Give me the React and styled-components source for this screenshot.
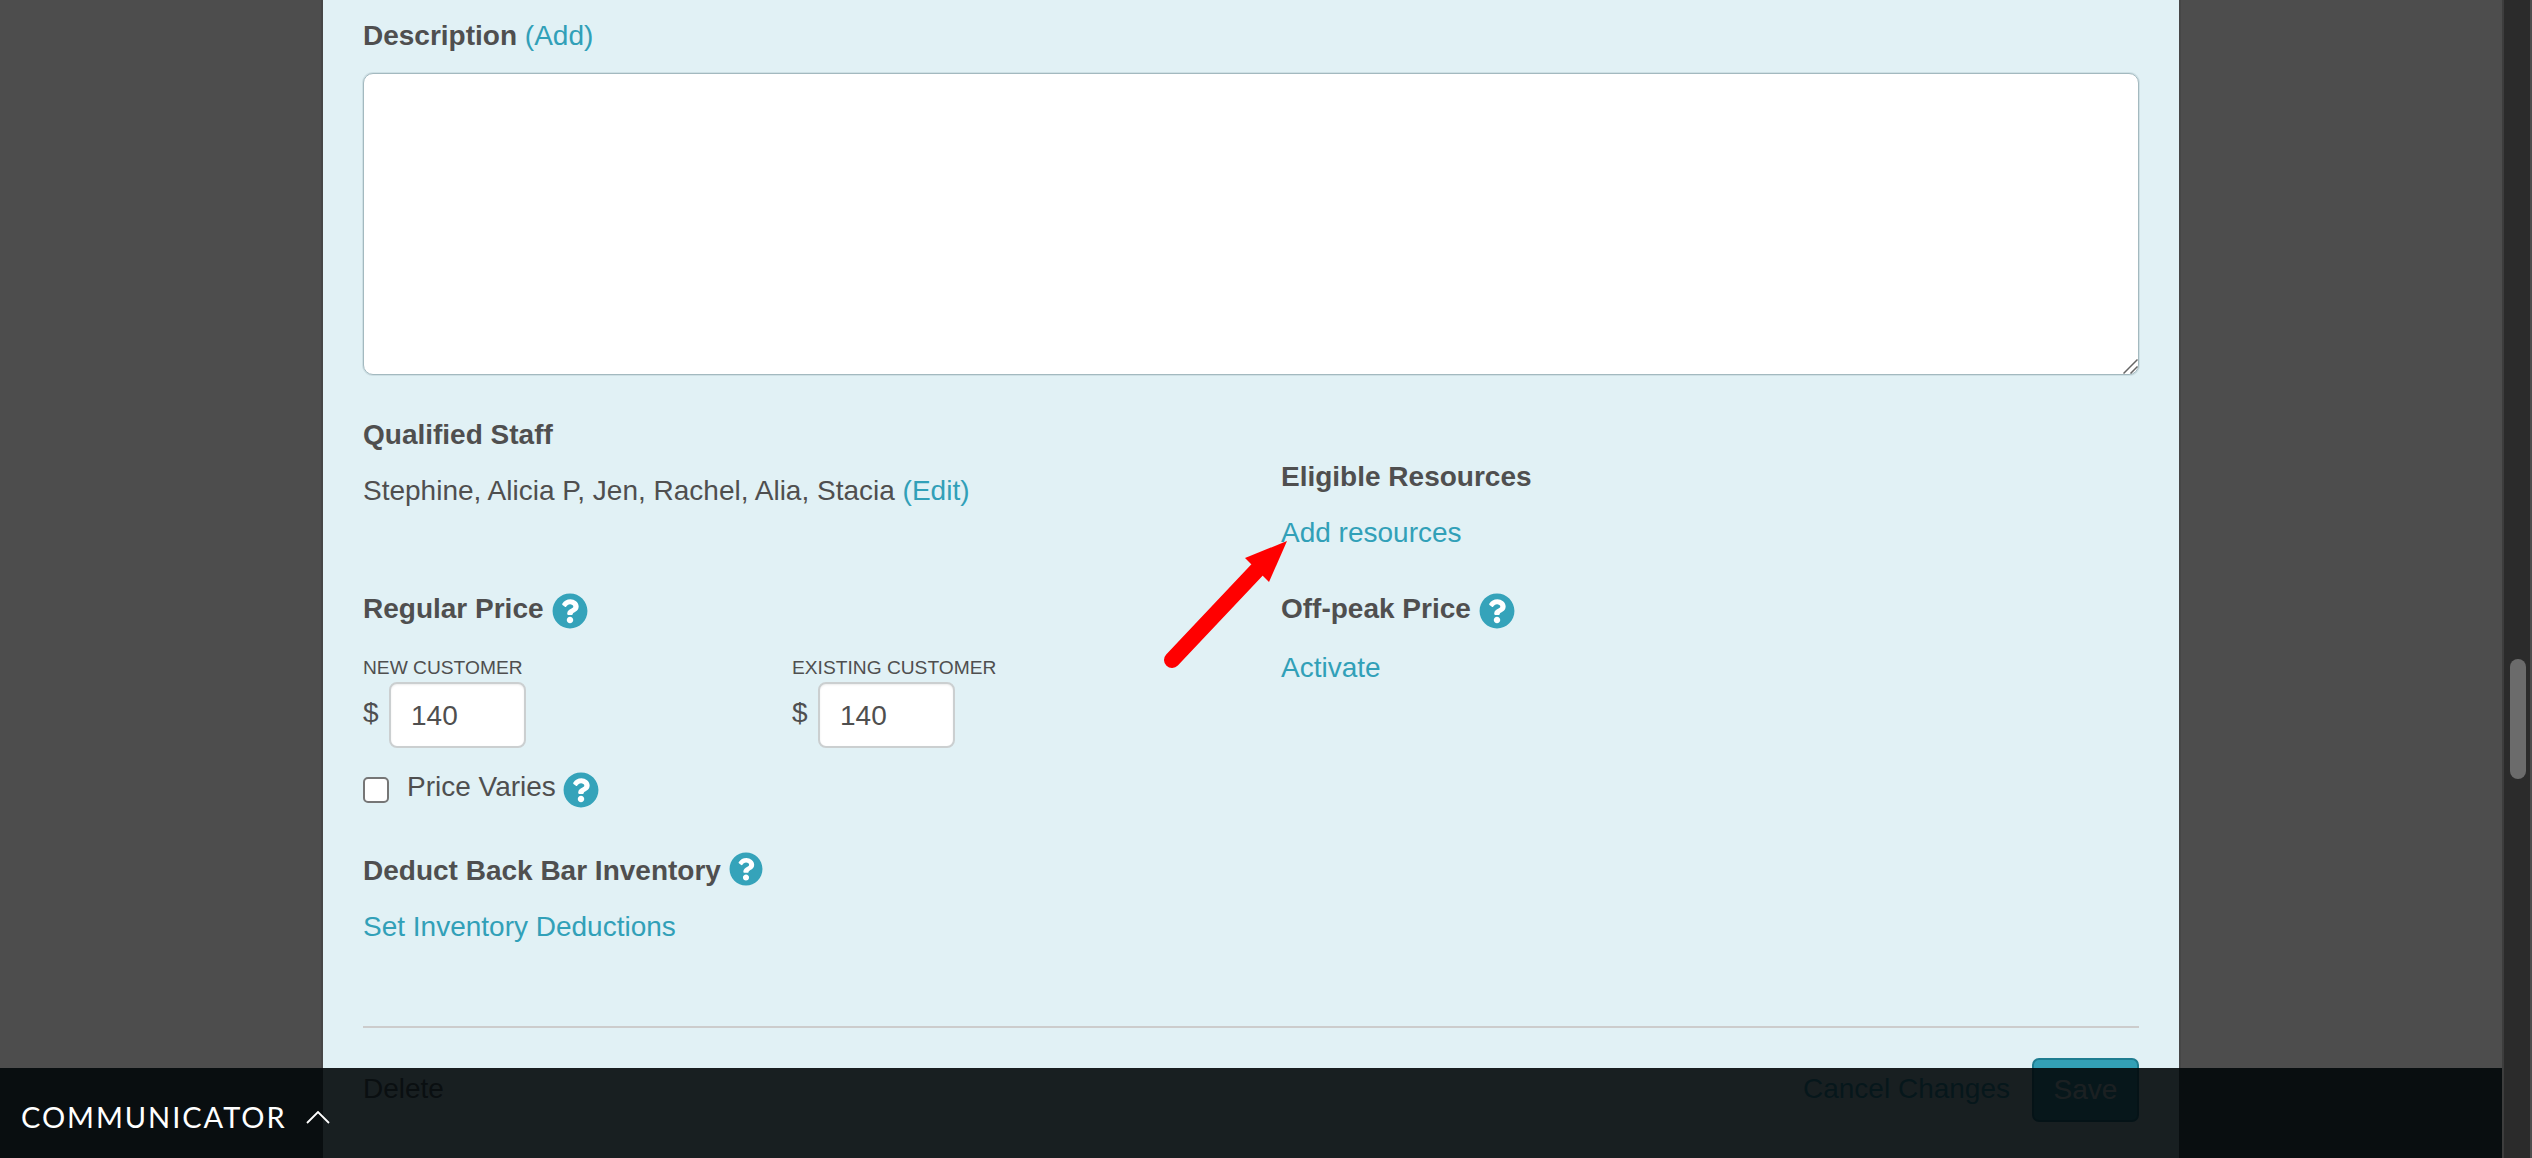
import styled, { createGlobalStyle } from "styled-components";
import { FaQuestionCircle } from "react-icons/fa";

const GlobalStyle = createGlobalStyle`
  html, body {
    margin: 0;
    padding: 0;
    overflow: hidden;
    background: #4d4d4d;
  }
`

const Page = styled.div`
  width: 2532px;
  height: 1158px;
  display: flex;
  overflow: hidden;
  font-family: "Liberation Sans", Arial, sans-serif;
  font-size: 28px;
  line-height: 40px;
  color: #4f4f4f;
`

const Backdrop = styled.div`
  position: relative;
  flex: 1;
  height: 100%;
  overflow: hidden;
  background: #4d4d4d;
`

const ScrollTrack = styled.div`
  width: 30px;
  padding-top: 659px;
  box-sizing: border-box;
  background: #2b2b2b;
  border-left: 2px solid #3d3d3d;
  border-right: 2px solid #4d4d4d;
`

const ScrollThumb = styled.div`
  width: 16px;
  height: 120px;
  margin-left: 6px;
  border-radius: 8px;
  background: #6b6b6b;
`

const Panel = styled.div`
  position: relative;
  width: 1856px;
  margin-left: 323px;
  padding: 16px 40px 0;
  box-sizing: border-box;
  background: #e1f1f5;
  box-shadow: 0 0 0 2px #464646;
`

const Label = styled.div`
  display: flex;
  align-items: flex-start;
  gap: ${p => p.$gap ?? 8}px;
  font-weight: bold;
  margin-top: ${p => p.$top ?? 0}px;
`

const Link = styled.a`
  color: #31a0b8;
  font-weight: normal;
  text-decoration: none;
`

const Paragraph = styled.div`
  margin-top: ${p => p.$top ?? 16}px;
`

const Description = styled.textarea`
  display: block;
  width: 100%;
  height: 302px;
  margin-top: 17px;
  box-sizing: border-box;
  background: #fff;
  border: 1px solid #a3b9bf;
  border-radius: 10px;
  box-shadow: 0 0 0 1px rgba(163, 185, 191, 0.3);
  outline: none;

  &::-webkit-resizer {
    background: url("data:image/svg+xml,%3Csvg xmlns='http://www.w3.org/2000/svg' width='15' height='15'%3E%3Cpath d='M0.5 14.5L14.5 0.5M7.5 14.5L14.5 7.5' stroke='%23666' stroke-width='1.5'/%3E%3C/svg%3E") no-repeat;
  }
`

const Columns = styled.div`
  display: grid;
  grid-template-columns: 918px 1fr;
  margin-top: 40px;
`

const RightColumn = styled.div`
  padding-top: 42px;
`

const PriceGrid = styled.div`
  display: grid;
  grid-template-columns: 429px 1fr;
  margin-top: 27px;
`

const SmallLabel = styled.div`
  font-size: 19.2px;
  line-height: 24px;
`

const PriceRow = styled.div`
  display: flex;
  margin-top: 2px;
`

const Dollar = styled.span`
  width: 26px;
  padding-top: 11px;
`

const PriceInput = styled.input`
  width: 137px;
  height: 66px;
  padding: 2px 0 0 20px;
  box-sizing: border-box;
  background: #fff;
  border: 2px solid #cbcfd0;
  border-radius: 8px;
  box-shadow: inset 0 1px 2px rgba(0, 0, 0, 0.08);
  outline: none;
  font: inherit;
  color: inherit;
`

const CheckRow = styled.label`
  display: flex;
  align-items: flex-start;
  margin-top: 19px;
`

const CheckBox = styled.input`
  appearance: none;
  width: 26px;
  height: 26px;
  margin: 10px 18px 0 0;
  box-sizing: border-box;
  background: #fff;
  border: 2px solid #767676;
  border-radius: 5px;
`

const HelpWrap = styled.span`
  display: block;
  width: ${p => p.$size}px;
  height: ${p => p.$size}px;
  margin-top: ${p => p.$top}px;
  margin-left: ${p => p.$left ?? 0}px;
  border-radius: 50%;
  background: radial-gradient(circle, #fff 55%, transparent 56%);
  color: #35a3ba;

  svg {
    display: block;
    width: 100%;
    height: 100%;
  }
`

function Help({ size = 36, top = 4, left }) {
    return (
        <HelpWrap $size={size} $top={top} $left={left}>
            <FaQuestionCircle/>
        </HelpWrap>
    )
}

const Divider = styled.div`
  height: 2px;
  margin-top: 79px;
  background: #cccccc;
`

const Footer = styled.div`
  display: flex;
  align-items: flex-start;
  margin-top: 30px;
  padding-bottom: 60px;
`

const DeleteLink = styled.a`
  flex: 1;
  padding-top: 11px;
  color: #4f4f4f;
`

const CancelLink = styled(Link)`
  margin-right: 22px;
  padding-top: 11px;
`

const SaveButton = styled.button`
  width: 107px;
  height: 64px;
  padding: 0;
  box-sizing: border-box;
  background: #33a0b6;
  border: 2px solid #1f7d90;
  border-radius: 7px;
  color: #fff;
  font: inherit;
`

const ArrowSvg = styled.svg`
  position: absolute;
  left: 837px;
  top: 530px;
  width: 140px;
  height: 140px;
`

const CommunicatorBar = styled.div`
  position: absolute;
  left: 0;
  right: 0;
  bottom: 0;
  height: 90px;
  display: flex;
  align-items: center;
  gap: 19px;
  padding: 8px 0 0 21px;
  box-sizing: border-box;
  background: rgba(2, 8, 10, 0.9);
  color: #fff;
  font-family: Lato, "Open Sans", sans-serif;
  font-weight: 400;
  font-size: 29px;
  letter-spacing: 1.95px;
`

const Chevron = styled.svg`
  width: 24px;
  height: 13px;
  margin-top: 1px;
`

export default function App() {
    return (
        <Page>
            <GlobalStyle/>
            <Backdrop>
                <Panel>
                    <Label>
                        <span>Description <Link>(Add)</Link></span>
                    </Label>
                    <Description/>
                    <Columns>
                        <div>
                            <Label>Qualified Staff</Label>
                            <Paragraph>
                                Stephine, Alicia P, Jen, Rachel, Alia, Stacia <Link>(Edit)</Link>
                            </Paragraph>
                            <Label $top={78}>
                                Regular Price <Help/>
                            </Label>
                            <PriceGrid>
                                <div>
                                    <SmallLabel>NEW CUSTOMER</SmallLabel>
                                    <PriceRow>
                                        <Dollar>$</Dollar>
                                        <PriceInput defaultValue="140"/>
                                    </PriceRow>
                                </div>
                                <div>
                                    <SmallLabel>EXISTING CUSTOMER</SmallLabel>
                                    <PriceRow>
                                        <Dollar>$</Dollar>
                                        <PriceInput defaultValue="140"/>
                                    </PriceRow>
                                </div>
                            </PriceGrid>
                            <CheckRow>
                                <CheckBox type="checkbox"/>
                                <span>Price Varies</span>
                                <Help top={5} left={7}/>
                            </CheckRow>
                            <Label $top={43}>
                                Deduct Back Bar Inventory <Help size={34} top={1}/>
                            </Label>
                            <Paragraph>
                                <Link>Set Inventory Deductions</Link>
                            </Paragraph>
                        </div>
                        <RightColumn>
                            <Label>Eligible Resources</Label>
                            <Paragraph>
                                <Link>Add resources</Link>
                            </Paragraph>
                            <Label $top={36}>
                                Off-peak Price <Help/>
                            </Label>
                            <Paragraph $top={19}>
                                <Link>Activate</Link>
                            </Paragraph>
                        </RightColumn>
                    </Columns>
                    <Divider/>
                    <Footer>
                        <DeleteLink>Delete</DeleteLink>
                        <CancelLink>Cancel Changes</CancelLink>
                        <SaveButton>Save</SaveButton>
                    </Footer>
                    <ArrowSvg viewBox="0 0 140 140">
                        <line x1="12" y1="130" x2="97" y2="40" stroke="#ff0000" strokeWidth="16" strokeLinecap="round"/>
                        <polygon points="127,11 85,28 109,52" fill="#ff0000"/>
                    </ArrowSvg>
                </Panel>
                <CommunicatorBar>
                    COMMUNICATOR
                    <Chevron viewBox="0 0 24 13">
                        <polyline points="1,12 12,1 23,12" fill="none" stroke="#fff" strokeWidth="1.8"/>
                    </Chevron>
                </CommunicatorBar>
            </Backdrop>
            <ScrollTrack>
                <ScrollThumb/>
            </ScrollTrack>
        </Page>
    )
}
